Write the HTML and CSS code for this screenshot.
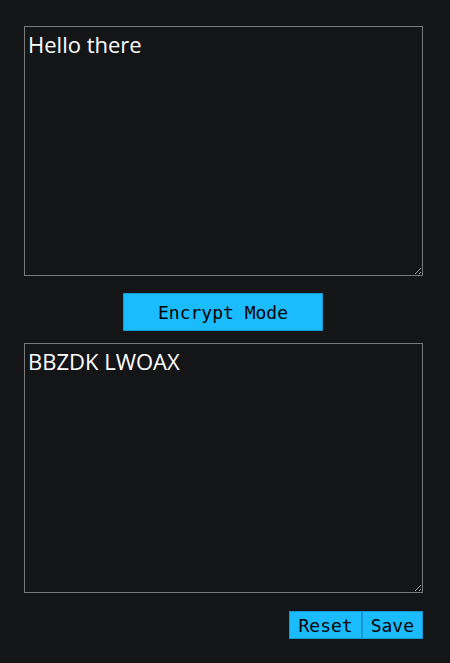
FILE: index.html
```html
<!DOCTYPE html>
<html>
<head>
<meta charset="utf-8">
<link rel="stylesheet" href="styles.css">
</head>
<body>
<main class="app">
  <textarea class="box">Hello there</textarea>
  <button class="mode">Encrypt Mode</button>
  <textarea class="box out">BBZDK LWOAX</textarea>
  <div class="actions">
    <button class="act">Reset</button><button class="act">Save</button>
  </div>
</main>
</body>
</html>
```
FILE: styles.css
```css
html, body {
  margin: 0;
  padding: 0;
  background: #141517;
}
.app {
  width: 399px;
  margin-left: 24px;
  padding-top: 26px;
  display: flex;
  flex-direction: column;
  align-items: center;
}
.box {
  box-sizing: border-box;
  width: 399px;
  height: 250px;
  margin: 0;
  padding: 2px 3px;
  background: #141517;
  border: 1px solid #7a7a7a;
  color: #ffffff;
  font-family: "Open Sans", sans-serif;
  font-size: 22px;
  line-height: 30px;
  outline: none;
}
.mode {
  margin: 17px 1px 12px 0;
  width: 200px;
  height: 38px;
  background: #1bbcfe;
  border: 1px solid #1798cf;
  color: #000;
  font-family: "DejaVu Sans Mono", monospace;
  font-size: 18px;
  padding: 0;
}
.actions {
  align-self: flex-end;
  display: flex;
  margin-top: 18px;
}
.act {
  height: 28px;
  background: #1bbcfe;
  border: 1px solid #1798cf;
  color: #000;
  font-family: "DejaVu Sans Mono", monospace;
  font-size: 18px;
  padding: 0 8px;
  margin: 0;
}
```
